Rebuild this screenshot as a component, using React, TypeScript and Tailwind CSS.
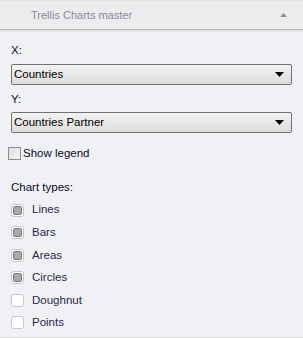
const CHART_TYPES = [
  { label: 'Lines', checked: true },
  { label: 'Bars', checked: true },
  { label: 'Areas', checked: true },
  { label: 'Circles', checked: true },
  { label: 'Doughnut', checked: false },
  { label: 'Points', checked: false },
] as const;

function Select({ value }: { value: string }) {
  return (
    <div className="mx-[11px] flex h-[21px] items-center justify-between rounded-[2px] border border-[#707070] bg-gradient-to-b from-[#f3f3f3] to-[#dcdcdc] pl-[2px] pr-[7px] text-[11.5px] text-black">
      <span>{value}</span>
      <svg width="9" height="5" viewBox="0 0 9 5">
        <path d="M0 0h9L4.5 5z" fill="#000" />
      </svg>
    </div>
  );
}

export default function App() {
  return (
    <div
      className="h-[338px] w-[303px] overflow-hidden border-b border-[#dcdcdc] bg-[#f0f1f5]"
      style={{ fontFamily: '"Liberation Sans", Arial, sans-serif' }}
    >
      <div className="flex h-[30px] items-center justify-between border-y border-t-[#e2e2e2] border-b-[#b5b5b5] bg-[#ececee] pl-[31px] pr-[16px] shadow-[0_2px_0_#e3e4e8]">
        <span className="text-[11px] text-[#8a8a99]">Trellis Charts master</span>
        <svg width="7" height="4" viewBox="0 0 7 4">
          <path d="M3.5 0L7 4H0z" fill="#8f8f8f" />
        </svg>
      </div>

      <div className="pt-[13px] text-[11.5px] text-[#0b0b28]">
        <div className="mb-[7px] pl-[11px] leading-[14px]">X:</div>
        <Select value="Countries" />
        <div className="mb-[6px] mt-[7px] pl-[11px] leading-[14px]">Y:</div>
        <Select value="Countries Partner" />

        <label className="mt-[13px] flex items-center gap-[2px] pl-[8px] leading-[14px]">
          <span className="h-[13px] w-[13px] border border-[#8c8c8c] bg-gradient-to-br from-[#dcdcdc] to-[#f7f7f7]" />
          <span>Show legend</span>
        </label>

        <div className="mt-[20px] pl-[11px] leading-[14px]">Chart types:</div>
        <div className="mt-[9px] flex flex-col gap-[8.6px] pl-[11px]">
          {CHART_TYPES.map((t) => (
            <label key={t.label} className="flex h-[14px] items-center gap-[8px] text-[#28284a]">
              {t.checked ? (
                <span className="flex h-[13px] w-[13px] items-center justify-center rounded-[3px] border border-[#c4c4c4] bg-white">
                  <span className="h-[9px] w-[9px] rounded-[2px] border border-[#7a7a7a] bg-[#a9a9a9]" />
                </span>
              ) : (
                <span className="h-[13px] w-[13px] rounded-[3px] border border-[#c8c8c8] bg-white" />
              )}
              <span>{t.label}</span>
            </label>
          ))}
        </div>
      </div>
    </div>
  );
}
